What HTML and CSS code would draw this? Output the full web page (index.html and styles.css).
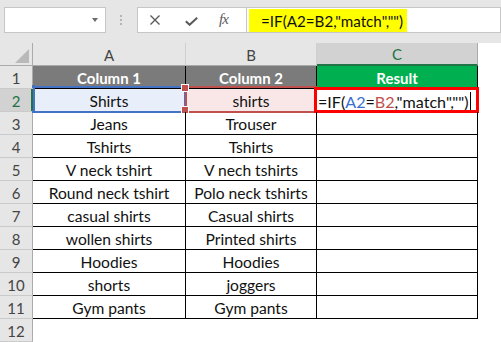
FILE: index.html
```html
<!DOCTYPE html>
<html>
<head>
<meta charset="utf-8">
<link rel="stylesheet" href="styles.css">
</head>
<body>
<div class="toolbar">
  <div class="namebox"><span class="caret"></span></div>
  <div class="dots"><i></i><i></i><i></i></div>
  <div class="fxbtns">
    <svg class="ic-x" width="10" height="10" viewBox="0 0 10 10"><path d="M0.5 0.5L9.5 9.5M9.5 0.5L0.5 9.5" stroke="#5a5a5a" stroke-width="1.4" fill="none"/></svg>
    <svg class="ic-ok" width="13" height="9" viewBox="0 0 13 9"><path d="M0.8 4.2L4.6 7.8L12.2 0.8" stroke="#5a5a5a" stroke-width="2" fill="none"/></svg>
    <span class="fx">fx</span>
  </div>
  <div class="formula"><span class="hl">=IF(A2=B2,"match","")</span></div>
</div>
<div class="sheet">
  <div class="corner"><span class="tri"></span></div>
  <div class="ch">A</div>
  <div class="ch">B</div>
  <div class="ch ch-sel">C</div>

  <div class="rh">1</div>
  <div class="c h-grey">Column 1</div>
  <div class="c h-grey">Column 2</div>
  <div class="c h-green">Result</div>

  <div class="rh rh-sel">2</div>
  <div class="c a2">Shirts<span class="rng rng-a"></span><span class="hd hd-a hd-t"></span><span class="hd hd-a hd-b"></span></div>
  <div class="c b2">shirts<span class="rng rng-b"></span><span class="hd hd-b1 hd-t"></span><span class="hd hd-b1 hd-bt"></span></div>
  <div class="c c2"><span class="edit">=IF(<span class="ref-a">A2</span>=<span class="ref-b">B2</span>,"match","")</span><span class="cursor"></span><span class="redbox"></span></div>

  <div class="rh">3</div><div class="c">Jeans</div><div class="c">Trouser</div><div class="c"></div>
  <div class="rh">4</div><div class="c">Tshirts</div><div class="c">Tshirts</div><div class="c"></div>
  <div class="rh">5</div><div class="c">V neck tshirt</div><div class="c">V nech tshirts</div><div class="c"></div>
  <div class="rh">6</div><div class="c">Round neck tshirt</div><div class="c">Polo neck tshirts</div><div class="c"></div>
  <div class="rh">7</div><div class="c">casual shirts</div><div class="c">Casual shirts</div><div class="c"></div>
  <div class="rh">8</div><div class="c">wollen shirts</div><div class="c">Printed shirts</div><div class="c"></div>
  <div class="rh">9</div><div class="c">Hoodies</div><div class="c">Hoodies</div><div class="c"></div>
  <div class="rh">10</div><div class="c">shorts</div><div class="c">joggers</div><div class="c"></div>
  <div class="rh">11</div><div class="c">Gym pants</div><div class="c">Gym pants</div><div class="c"></div>
  <div class="rh">12</div>
</div>
</body>
</html>
```
FILE: styles.css
```css
* { box-sizing: border-box; }
html, body { margin: 0; padding: 0; background: #fff; }
body { font-family: Lato, "Open Sans", sans-serif; color: #111; overflow: hidden; }

.toolbar {
  height: 43px;
  background: #e6e6e6;
  display: flex;
  align-items: flex-start;
  padding-top: 7px;
}
.namebox {
  margin-left: 4px;
  width: 102px;
  height: 26px;
  background: #fff;
  border: 1px solid #c6c6c6;
  display: flex;
  align-items: center;
  justify-content: flex-end;
  padding-right: 7px;
}
.caret {
  width: 0; height: 0;
  border-left: 3px solid transparent;
  border-right: 3px solid transparent;
  border-top: 4px solid #6b6b6b;
}
.dots {
  margin: 8px 15px 0 14px;
  display: flex;
  flex-direction: column;
  gap: 2px;
}
.dots i { display: block; width: 2px; height: 2px; background: #b4b4b4; }
.fxbtns {
  width: 110px;
  height: 26px;
  background: #fff;
  border: 1px solid #c6c6c6;
  display: flex;
  align-items: center;
}
.ic-x { margin-left: 12px; }
.ic-ok { margin-left: 25px; margin-top: 2px; }
.fx {
  margin-left: 21px;
  font-family: "Liberation Serif", serif;
  font-style: italic;
  font-size: 15px;
  color: #5a5a5a;
  letter-spacing: -1px;
  margin-top: -2px;
}
.formula {
  flex: 1;
  height: 26px;
  background: #fff;
  border: 1px solid #c6c6c6;
  border-left: none;
  padding: 1px 0 0 2px;
}
.hl {
  display: flex;
  align-items: center;
  width: 158px;
  height: 23px;
  background: #ffff00;
  padding-left: 12px;
  font-size: 15.2px;
  color: #111;
  white-space: nowrap;
}

.sheet {
  display: grid;
  grid-template-columns: 33px 153px 131px 161px;
  grid-auto-rows: 23px;
  width: 478px;
  font-size: 15.6px;
}
.corner {
  position: relative;
  background: #e6e6e6;
  border-right: 1px solid #ababab;
  border-bottom: 1px solid #ababab;
}
.tri {
  position: absolute;
  right: 3px;
  bottom: 2px;
  width: 0; height: 0;
  border-left: 14px solid transparent;
  border-bottom: 14px solid #b9b9b9;
}
.ch {
  background: #e6e6e6;
  border-right: 1px solid #cfcfcf;
  border-bottom: 1px solid #ababab;
  display: flex;
  align-items: center;
  justify-content: center;
  padding-top: 1px;
  color: #444;
  font-size: 15px;
}
.ch-sel {
  background: #d2d2d2;
  color: #217346;
  border-right-color: #ababab;
  border-bottom: 2px solid #217346;
}
.rh {
  background: #e6e6e6;
  border-right: 1px solid #ababab;
  border-bottom: 1px solid #cacaca;
  display: flex;
  align-items: center;
  justify-content: center;
  padding-top: 1px;
  color: #444;
  font-size: 15px;
}
.rh-sel {
  background: #d2d2d2;
  color: #217346;
  border-right-color: #217346;
  box-shadow: inset -1px 0 0 #217346;
}
.c {
  position: relative;
  border-right: 1px solid #000;
  border-bottom: 1px solid #000;
  display: flex;
  align-items: center;
  justify-content: center;
  padding-top: 2px;
  white-space: nowrap;
}
.h-grey { background: #7b7b7b; color: #fff; font-weight: bold; font-size: 15px; }
.h-green { background: #00b050; color: #fff; font-weight: bold; font-size: 15px; }
.a2 { background: #e8effa; }
.b2 { background: #f9e7e7; }
.c2 { justify-content: flex-start; padding-left: 1px; font-size: 16.1px; }
.ref-a { color: #3a6fd0; }
.ref-b { color: #c0504d; }
.cursor {
  display: inline-block;
  width: 1px;
  height: 19px;
  background: #000;
  margin-left: 2px;
}
.rng { position: absolute; top: -3px; height: 27px; }
.rng-a { left: 0; width: 153px; border: 2px solid #4472c4; }
.rng-b { left: -1px; width: 132px; border: 2px solid #c0504d; }
.redbox {
  position: absolute;
  left: -3px;
  top: -2px;
  width: 165px;
  height: 26px;
  border: 3px solid #ff0000;
}
.hd { position: absolute; }
.hd-a { left: -1px; width: 3px; height: 3px; background: #4472c4; }
.hd-a.hd-t { top: -4px; }
.hd-a.hd-b { top: 21px; }
.hd-b1 { left: -4px; width: 6px; height: 6px; background: #c0504d; box-shadow: 0 0 0 1px #fff; }
.hd-b1.hd-t { top: -4px; }
.hd-b1.hd-bt { top: 18px; }
```
